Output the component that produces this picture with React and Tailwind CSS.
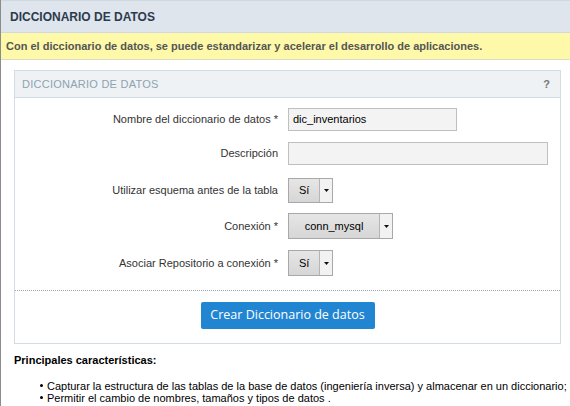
import React from "react";

const Select = ({ value, w, center }) => (
  <div className={`flex h-[25px] border border-[#a8a8a8] bg-gradient-to-b from-[#e6e6e6] to-[#d6d6d6] ${w}`}>
    <div className={`flex-1 flex items-center text-[11px] text-black ${center ? "justify-center" : "pl-[10px]"}`}>{value}</div>
    <div className="w-[13px] flex items-center justify-center border-l border-[#b5b5b5] bg-[#f2f2f2]">
      <svg width="5" height="3" viewBox="0 0 5 3"><path d="M0 0h5L2.5 3z" fill="#111" /></svg>
    </div>
  </div>
);

const Row = ({ label, children, mt }) => (
  <div className={`flex items-center ${mt}`}>
    <div className="w-[273px] text-right text-[11px] text-[#333] pr-[10px]">{label}</div>
    {children}
  </div>
);

const features = [
  "Capturar la estructura de las tablas de la base de datos (ingeniería inversa) y almacenar en un diccionario;",
  "Permitir el cambio de nombres, tamaños y tipos de datos .",
];

export default function App() {
  return (
    <div className="min-h-[406px] w-[570px] border-l border-[#8c8c8c] bg-white font-['Liberation_Sans',Arial,sans-serif]">
      <div className="h-[33px] bg-[#dfe5ec] border-t border-[#d0d8e0] border-b border-[#cfd7df] flex items-center pl-[9px]">
        <span className="text-[12px] font-bold text-[#2c3a4d]">DICCIONARIO DE DATOS</span>
      </div>
      <div className="h-[27px] bg-[#fdf9a8] border-b border-[#dcdcc8] flex items-center pl-[5px]">
        <span className="text-[11px] font-bold text-[#555]">Con el diccionario de datos, se puede estandarizar y acelerar el desarrollo de aplicaciones.</span>
      </div>

      <div className="ml-[13px] mt-[10px] w-[547px] border border-[#d3dce3]">
        <div className="h-[27px] bg-[#eef2f5] border-b border-[#d3dce3] flex items-center justify-between pl-[7px] pr-[10px]">
          <span className="text-[11px] tracking-[0.25px] text-[#8da2b2]">DICCIONARIO DE DATOS</span>
          <span className="text-[11px] font-bold text-[#777]">?</span>
        </div>
        <div className="flex flex-col pt-[10px]">
          <Row label="Nombre del diccionario de datos *">
            <div className="w-[169px] h-[23px] border border-[#bfbfbf] bg-[#f3f3f3] flex items-center pl-[4px] text-[11px] text-black">dic_inventarios</div>
          </Row>
          <Row label="Descripción" mt="mt-[11px]">
            <div className="w-[260px] h-[23px] border border-[#bfbfbf] bg-[#f3f3f3]" />
          </Row>
          <Row label="Utilizar esquema antes de la tabla" mt="mt-[13px]">
            <Select value="Sí" w="w-[45px]" />
          </Row>
          <Row label="Conexión *" mt="mt-[10px]">
            <Select value="conn_mysql" w="w-[105px] h-[26px]" center />
          </Row>
          <Row label="Asociar Repositorio a conexión *" mt="mt-[11px]">
            <Select value="Sí" w="w-[45px] h-[26px]" />
          </Row>
        </div>
        <div className="mt-[14px] border-t border-dotted border-[#9aa8b5]" />
        <div className="flex justify-center pt-[11px] pb-[14px]">
          <button className="h-[27px] w-[174px] bg-[#2285d1] rounded-[2px] text-white text-[12.5px] font-['Open_Sans',sans-serif]">
            Crear Diccionario de datos
          </button>
        </div>
      </div>

      <div className="pl-[13px] pt-[8px] text-[11px] text-black">
        <div className="font-bold">Principales características:</div>
        <div className="mt-[11px] flex flex-col leading-[12px]">
          {features.map(f => (
            <div key={f} className="flex items-center whitespace-nowrap">
              <span className="ml-[26px] mr-[4px] w-[3px] h-[3px] rounded-full bg-black" />
              <span>{f}</span>
            </div>
          ))}
        </div>
      </div>
    </div>
  );
}
